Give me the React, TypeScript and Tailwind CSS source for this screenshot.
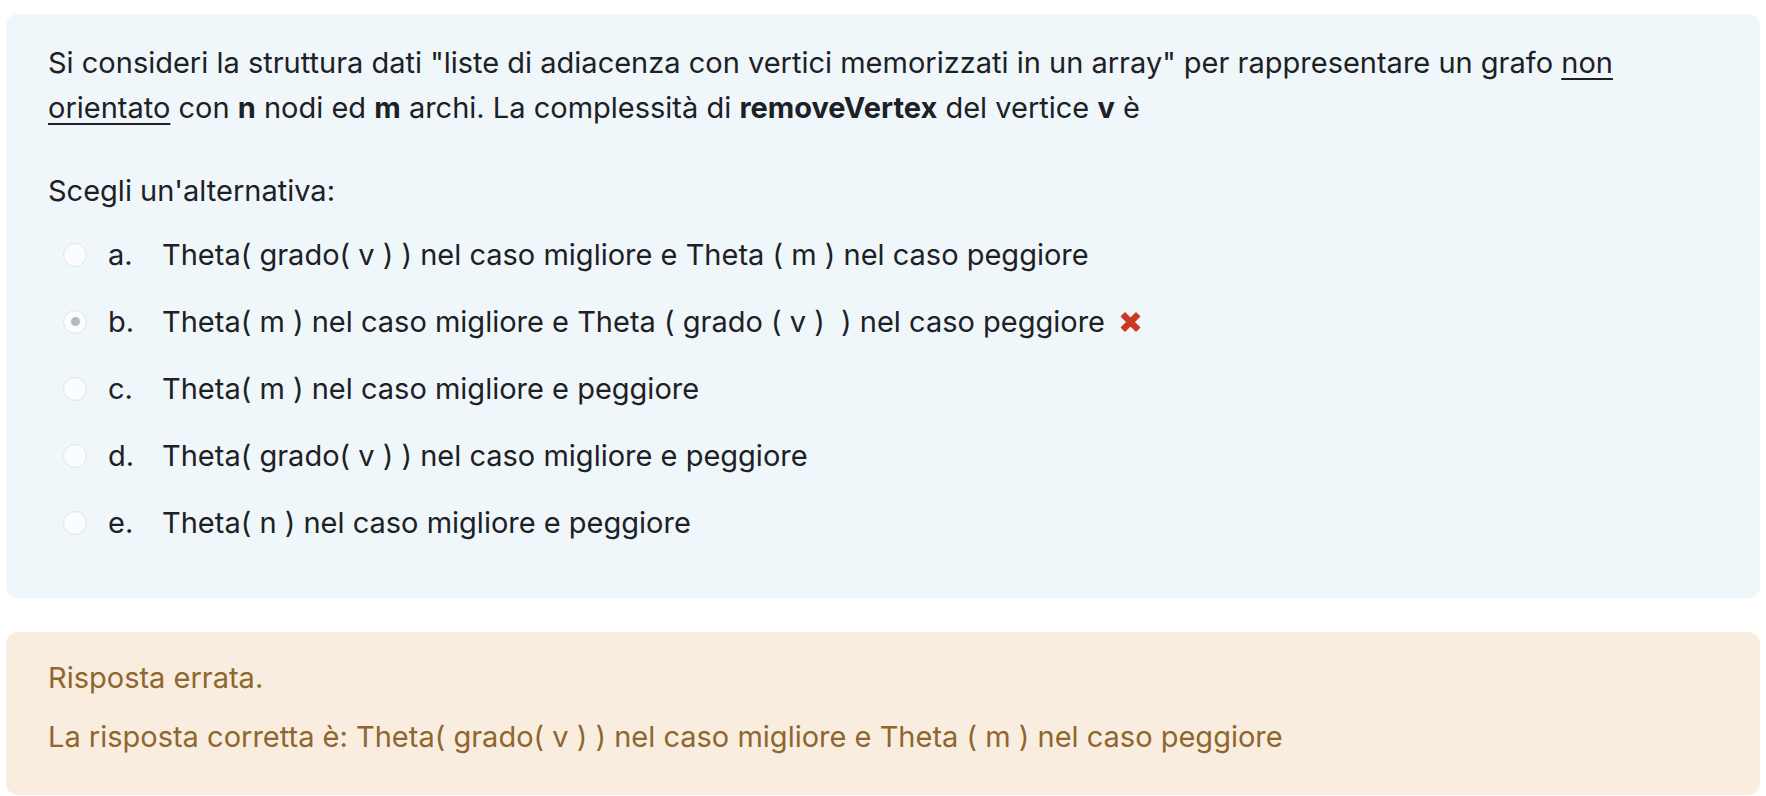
const OPTIONS = [
  { letter: 'a.', text: 'Theta( grado( v ) ) nel caso migliore e Theta ( m ) nel caso peggiore', checked: false, wrong: false },
  { letter: 'b.', text: 'Theta( m ) nel caso migliore e Theta ( grado ( v )  ) nel caso peggiore', checked: true, wrong: true },
  { letter: 'c.', text: 'Theta( m ) nel caso migliore e peggiore', checked: false, wrong: false },
  { letter: 'd.', text: 'Theta( grado( v ) ) nel caso migliore e peggiore', checked: false, wrong: false },
  { letter: 'e.', text: 'Theta( n ) nel caso migliore e peggiore', checked: false, wrong: false },
]

function Radio({ checked }: { checked: boolean }) {
  return (
    <span className="flex h-[24px] w-[24px] shrink-0 items-center justify-center rounded-full border border-[#e1e4e8] bg-[#fbfcfd]">
      {checked && <span className="h-[9px] w-[9px] rounded-full bg-[#b4b9be]" />}
    </span>
  )
}

function WrongMark() {
  return (
    <svg width="21" height="22" viewBox="0 0 21 22" className="ml-[15px] shrink-0">
      <path
        d="M1.5 5.5 L5 2 L10.5 7.5 L16 2 L19.5 5.5 L14 11 L19.5 16.5 L16 20 L10.5 14.5 L5 20 L1.5 16.5 L7 11 Z"
        fill="#ca3a22"
        stroke="#ca3a22"
        strokeWidth="1.5"
        strokeLinejoin="round"
      />
    </svg>
  )
}

export default function App() {
  return (
    <div
      className="min-h-screen w-full bg-white px-[6px] pt-[14px] text-[29px] leading-[45px] text-[#1d2125]"
      style={{ fontFamily: "Inter, 'Noto Sans', sans-serif" }}
    >
      {/* Question */}
      <div className="rounded-[12px] bg-[#eff7fb] pl-[42px] pr-[42px] pt-[26px] pb-[53px]">
        <p>
          Si consideri la struttura dati "liste di adiacenza con vertici memorizzati in un array" per rappresentare un grafo{' '}
          <span className="underline decoration-2 underline-offset-[5px]">non orientato</span> con <b>n</b> nodi ed <b>m</b>{' '}
          archi. La complessità di <b>removeVertex</b> del vertice <b>v</b> è
        </p>
        <p className="mt-[38px]">Scegli un'alternativa:</p>
        <div className="mt-[19px] flex flex-col gap-[22px] pl-[15px]">
          {OPTIONS.map(o => (
            <div key={o.letter} className="flex items-center">
              <Radio checked={o.checked} />
              <span className="ml-[21px] w-[54px] shrink-0">{o.letter}</span>
              <span className="whitespace-pre">{o.text}</span>
              {o.wrong && <WrongMark />}
            </div>
          ))}
        </div>
      </div>

      {/* Feedback */}
      <div className="mt-[34px] rounded-[12px] bg-[#f9eddf] pl-[42px] pt-[23px] pb-[36px] text-[#8e662e]">
        <p>Risposta errata.</p>
        <p className="mt-[14px]">La risposta corretta è: Theta( grado( v ) ) nel caso migliore e Theta ( m ) nel caso peggiore</p>
      </div>
    </div>
  )
}
